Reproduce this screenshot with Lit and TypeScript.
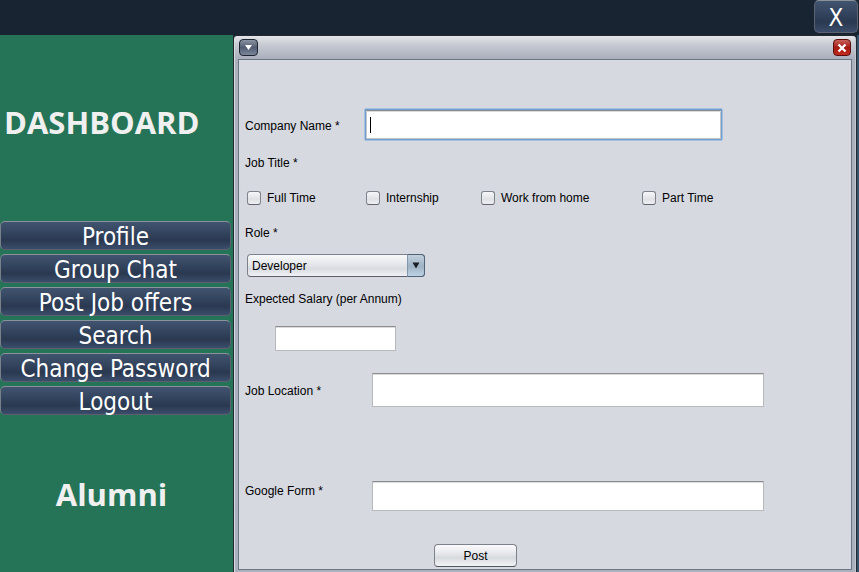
import { LitElement, html, css } from "lit";
import { customElement, property } from "lit/decorators.js";

@customElement("side-menu")
class SideMenu extends LitElement {
  static styles = css`
    :host {
      display: block;
      box-sizing: border-box;
      padding-right: 2px;
      background: #257457;
    }
    h1,
    h2 {
      margin: 0;
      font: 700 31px/40px "Open Sans", "Noto Sans", sans-serif;
      color: #f0f0f0;
      white-space: nowrap;
    }
    h1 {
      padding: 67px 0 79px 4px;
    }
    h2 {
      padding: 59px 8px 0 0;
      text-align: center;
    }
    nav {
      display: grid;
      gap: 4px;
    }
    button {
      height: 29px;
      padding: 3px 0 0;
      border: 1px solid #5c5f70;
      border-top-color: #8b929b;
      border-left-color: #78808c;
      border-radius: 5px;
      background: linear-gradient(#41546f, #33445e 40%, #2a3950 68%, #3b4d6b);
      color: #fff;
      font: 24px/24px "DejaVu Sans Condensed", "Noto Sans", sans-serif;
      white-space: nowrap;
    }
  `;
  items = ["Profile", "Group Chat", "Post Job offers", "Search", "Change Password", "Logout"];
  render() {
    return html`
      <h1>DASHBOARD</h1>
      <nav>${this.items.map((t) => html`<button type="button">${t}</button>`)}</nav>
      <h2>Alumni</h2>
    `;
  }
}

@customElement("internal-frame")
class InternalFrame extends LitElement {
  static styles = css`
    :host {
      display: flex;
      flex-direction: column;
      box-sizing: border-box;
      border: 1px solid #23282f;
      border-bottom: 0;
      border-radius: 4px 4px 0 0;
      padding: 0 4px;
      background: linear-gradient(#e4e6ea, #c9ccd4 8px, #abb0bd 22px, #a9b0be);
      box-shadow: inset 1px 0 #d8dae0, inset -1px 0 #c4c7cf;
    }
    header {
      display: flex;
      align-items: center;
      justify-content: space-between;
      height: 23px;
      padding: 0 1px;
    }
    header button {
      display: grid;
      place-items: center;
      width: 19px;
      height: 17px;
      padding: 0;
      border: 1px solid #1e2530;
      border-radius: 4px;
      background: linear-gradient(#8a93a3, #525d72 50%, #7a879b);
    }
    header .close {
      width: 18px;
      border-color: #5b0c0a;
      background: linear-gradient(#c9605a, #a41a12 50%, #c5291d);
    }
    svg {
      display: block;
    }
    .content {
      flex: 1;
      border: 1px solid #6b7583;
      background: #d6d9e0;
    }
    footer {
      height: 2px;
    }
  `;
  render() {
    return html`
      <header>
        <button type="button" aria-label="Window menu">
          <svg width="9" height="7" viewBox="0 0 9 7"><path d="M1 1h7L4.5 6z" fill="#fff" /></svg>
        </button>
        <button type="button" class="close" aria-label="Close window">
          <svg width="10" height="10" viewBox="0 0 10 10">
            <path d="M1.500 1.500l7 7M8.500 1.500l-7 7" stroke="#fff" stroke-width="2.300" />
          </svg>
        </button>
      </header>
      <div class="content"><slot></slot></div>
      <footer></footer>
    `;
  }
}

@customElement("job-form")
class JobForm extends LitElement {
  @property({ type: Array }) kinds = ["Full Time", "Internship", "Work from home", "Part Time"];
  static styles = css`
    :host {
      display: block;
      font: 12px/16px "Liberation Sans", Arial, sans-serif;
      color: #000;
    }
    form {
      display: flex;
      flex-direction: column;
      padding: 48px 87px 2px 6px;
    }
    input,
    select,
    button {
      font: inherit;
      color: inherit;
      box-sizing: border-box;
      margin: 0;
    }
    .row {
      display: grid;
      grid-template-columns: 127px 1fr;
    }
    .row label {
      padding-top: 2px;
    }
    .company {
      grid-template-columns: 119px 1fr;
      align-items: center;
      margin-right: 41px;
    }
    .location {
      align-items: center;
      margin-top: 22px;
    }
    .link {
      line-height: 16px;
      margin-top: 74px;
    }
    .text {
      width: 100%;
      height: 34px;
      padding: 0 6px;
      border: 1px solid #b7b8bb;
      border-top-color: #8b8c8f;
      border-radius: 0;
      background: #fff;
      box-shadow: inset 0 1px #dcdcdd;
      outline: none;
    }
    .link .text {
      height: 30px;
    }
    .field {
      position: relative;
      border: 1px solid #a6c1df;
      border-radius: 2px;
    }
    .field .text {
      display: block;
      height: 31px;
      border: 1px solid #6f9fd0;
      box-shadow: inset 0 1px #8b8c8f, inset 0 2px #dcdcdd, inset 0 0 0 1px #c3c5c9;
      caret-color: transparent;
    }
    .caret {
      position: absolute;
      left: 5px;
      top: 8px;
      width: 1px;
      height: 16px;
      background: #000;
    }
    .title {
      margin-top: 14px;
    }
    .kinds {
      display: grid;
      grid-template-columns: 119px 115px 161px auto;
      margin: 19px 0 0 2px;
    }
    .kinds label {
      display: flex;
      align-items: center;
      gap: 6px;
      white-space: nowrap;
    }
    .kinds input {
      appearance: none;
      width: 14px;
      height: 14px;
      border: 1px solid #7d828b;
      border-bottom-color: #60656f;
      border-radius: 3px;
      background: linear-gradient(#f6f7f9, #dfe1e5 60%, #eff0f3);
    }
    .role {
      margin-top: 19px;
    }
    .combo {
      position: relative;
      width: 178px;
      margin: 13px 0 0 2px;
    }
    select {
      display: block;
      appearance: none;
      width: 100%;
      height: 23px;
      padding: 0 20px 0 4px;
      border: 1px solid #7c828c;
      border-bottom-color: #585f6a;
      border-radius: 4px;
      background: linear-gradient(#f8f9fa, #e2e4e8 50%, #d8dbe0 65%, #f0f1f4);
    }
    .arrow {
      position: absolute;
      right: 0;
      top: 0;
      display: grid;
      place-items: center;
      box-sizing: border-box;
      width: 18px;
      height: 23px;
      border: 1px solid #4f6379;
      border-left-color: #8197ab;
      border-radius: 0 4px 4px 0;
      background: linear-gradient(#c3d0dc, #9fb3c5 55%, #bdd2e4);
      pointer-events: none;
    }
    .salary-label {
      margin-top: 14px;
    }
    .salary {
      width: 121px;
      height: 25px;
      margin: 19px 0 0 30px;
    }
    .post {
      width: 83px;
      height: 23px;
      margin: 33px 0 0 189px;
      padding: 0;
      border: 1px solid #7c828c;
      border-bottom-color: #50555e;
      border-radius: 4px;
      background: linear-gradient(#fbfbfc, #e3e5e9 45%, #d7dade 60%, #f2f3f5);
    }
  `;
  render() {
    return html`
      <form>
        <div class="row company">
          <label for="company">Company Name *</label>
          <div class="field"><input id="company" class="text" /><span class="caret"></span></div>
        </div>
        <div class="title" id="kinds">Job Title *</div>
        <div class="kinds" role="group" aria-labelledby="kinds">
          ${this.kinds.map((k) => html`<label><input type="checkbox" />${k}</label>`)}
        </div>
        <label class="role" for="role">Role *</label>
        <div class="combo">
          <select id="role"><option>Developer</option></select>
          <span class="arrow">
            <svg width="8" height="7" viewBox="0 0 8 7"><path d="M.5 .5h7L4 6.500z" fill="#1a1f26" /></svg>
          </span>
        </div>
        <label class="salary-label" for="salary">Expected Salary (per Annum)</label>
        <input id="salary" class="text salary" />
        <div class="row location">
          <label for="location">Job Location *</label>
          <input id="location" class="text" />
        </div>
        <div class="row link">
          <label for="link">Google Form *</label>
          <input id="link" class="text" />
        </div>
        <button type="button" class="post">Post</button>
      </form>
    `;
  }
}

@customElement("app-root")
class AppRoot extends LitElement {
  static styles = css`
    :host {
      display: flex;
      flex-direction: column;
      min-height: 100vh;
      background: #192433;
    }
    .top {
      display: flex;
      justify-content: flex-end;
      align-items: flex-start;
      height: 35px;
      padding-right: 1px;
    }
    .exit {
      width: 44px;
      height: 33px;
      padding: 3px 0 0;
      border: 1px solid #5c6270;
      border-top-color: #8b929b;
      border-radius: 5px;
      background: linear-gradient(#41546f, #33445e 40%, #2a3950 68%, #3b4d6b);
      color: #fff;
      font: 24px/28px "DejaVu Sans Condensed", "Noto Sans", sans-serif;
    }
    .main {
      flex: 1;
      display: grid;
      grid-template-columns: 233px 1fr;
      padding-right: 2px;
      background: #33566f;
    }
    .desk {
      display: grid;
      background: #192433;
    }
  `;
  render() {
    return html`
      <div class="top"><button type="button" class="exit">X</button></div>
      <div class="main">
        <side-menu></side-menu>
        <div class="desk">
          <internal-frame><job-form></job-form></internal-frame>
        </div>
      </div>
    `;
  }
}
